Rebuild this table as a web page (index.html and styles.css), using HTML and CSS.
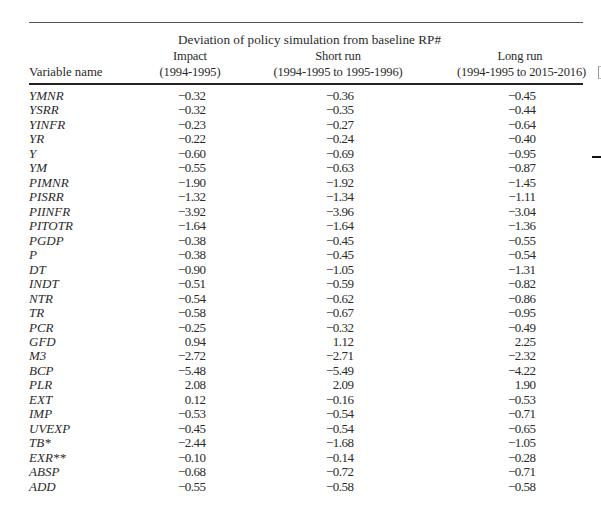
FILE: index.html
```html
<!DOCTYPE html>
<html>
<head>
<meta charset="utf-8">
<link rel="stylesheet" href="styles.css">
</head>
<body>
<div class="page">
  <div class="table">
    <div class="head">
      <div class="span-title">Deviation of policy simulation from baseline RP#</div>
      <div class="hname">Variable name</div>
      <div class="hcol c2">Impact<br>(1994-1995)</div>
      <div class="hcol c3">Short run<br>(1994-1995 to 1995-1996)</div>
      <div class="hcol c5">Long run<br>(1994-1995 to 2015-2016)</div>
    </div>
    <div class="body" id="body"></div>
    <span class="edge-bracket"></span>
    <span class="edge-dash"></span>
  </div>
</div>
<script src="app.js"></script>
</body>
</html>
```

FILE: app.js
```js
const rows = [
["YMNR","−0.32","−0.36","−0.45"],
["YSRR","−0.32","−0.35","−0.44"],
["YINFR","−0.23","−0.27","−0.64"],
["YR","−0.22","−0.24","−0.40"],
["Y","−0.60","−0.69","−0.95"],
["YM","−0.55","−0.63","−0.87"],
["PIMNR","−1.90","−1.92","−1.45"],
["PISRR","−1.32","−1.34","−1.11"],
["PIINFR","−3.92","−3.96","−3.04"],
["PITOTR","−1.64","−1.64","−1.36"],
["PGDP","−0.38","−0.45","−0.55"],
["P","−0.38","−0.45","−0.54"],
["DT","−0.90","−1.05","−1.31"],
["INDT","−0.51","−0.59","−0.82"],
["NTR","−0.54","−0.62","−0.86"],
["TR","−0.58","−0.67","−0.95"],
["PCR","−0.25","−0.32","−0.49"],
["GFD","0.94","1.12","2.25"],
["M3","−2.72","−2.71","−2.32"],
["BCP","−5.48","−5.49","−4.22"],
["PLR","2.08","2.09","1.90"],
["EXT","0.12","−0.16","−0.53"],
["IMP","−0.53","−0.54","−0.71"],
["UVEXP","−0.45","−0.54","−0.65"],
["TB*","−2.44","−1.68","−1.05"],
["EXR**","−0.10","−0.14","−0.28"],
["ABSP","−0.68","−0.72","−0.71"],
["ADD","−0.55","−0.58","−0.58"]
];
const body = document.getElementById("body");
let html = "";
for (const r of rows) {
  html += `<div class="name">${r[0]}</div>` +
    `<div class="val c2"><span>${r[1]}</span></div>` +
    `<div class="val c3"><span>${r[2]}</span></div>` +
    `<div class="val c5"><span>${r[3]}</span></div>`;
}
body.innerHTML = html;
```

FILE: styles.css
```css
html, body {
  margin: 0;
  padding: 0;
  background: #ffffff;
}
body {
  font-family: "Liberation Serif", "Times New Roman", serif;
  color: #2a2a2a;
  font-size: 12.5px;
}
.page {
  padding: 22px 0 0 29px;
  width: 554px;
}
.table {
  position: relative;
  width: 554px;
}
.head, .body {
  display: grid;
  grid-template-columns: 121px 80px 216px 11px 126px;
}
.head {
  border-top: 1px solid #555;
  border-bottom: 2px solid #222;
  padding-top: 9px;
  padding-bottom: 3px;
  grid-template-rows: 16px 16px 16px;
  line-height: 16px;
}
.span-title {
  grid-column: 2 / 6;
  grid-row: 1;
  padding-left: 28px;
  white-space: nowrap;
  font-size: 13.2px;
}
.hname {
  grid-column: 1;
  grid-row: 3;
  font-size: 12.8px;
}
.hcol {
  grid-row: 2 / 4;
  text-align: center;
  white-space: nowrap;
  letter-spacing: -0.15px;
}
.head .c2 { grid-column: 2; }
.head .c3 { grid-column: 3; }
.head .c5 { grid-column: 5; }
.body {
  padding-top: 4px;
  grid-auto-rows: 14.48px;
  line-height: 14.48px;
}
.name {
  grid-column: 1;
  font-style: italic;
  font-size: 13px;
}
.val {
  text-align: center;
  font-size: 13px;
}
.val span {
  display: inline-block;
  width: 31px;
  text-align: right;
  letter-spacing: -0.5px;
}
.body .c2 { grid-column: 2; }
.body .c3 { grid-column: 3; }
.body .c5 { grid-column: 5; }
.edge-bracket {
  position: absolute;
  left: 569px;
  top: 44px;
  width: 2px;
  height: 11px;
  border-left: 1px solid #999;
  border-top: 1px solid #bbb;
  border-bottom: 1px solid #bbb;
}
.edge-dash {
  position: absolute;
  left: 563px;
  top: 134px;
  width: 10px;
  height: 2px;
  background: #111;
}
```
